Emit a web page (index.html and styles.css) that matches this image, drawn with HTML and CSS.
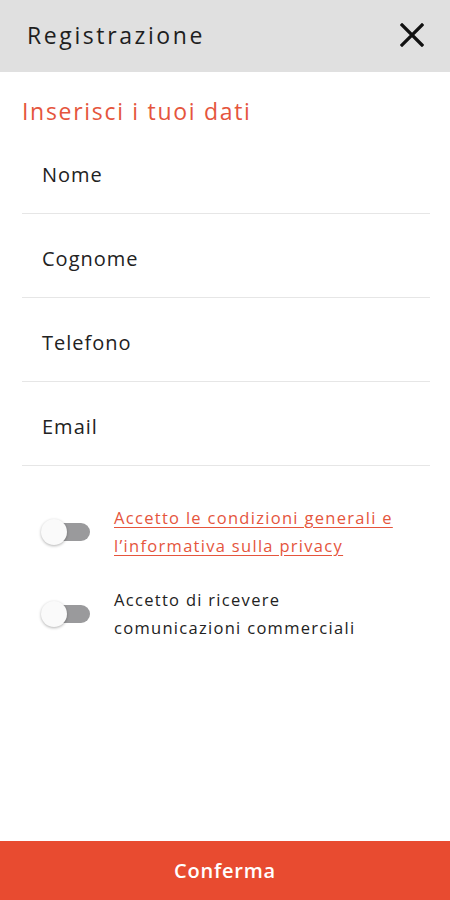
FILE: index.html
```html
<!DOCTYPE html>
<html lang="it">
<head>
<meta charset="utf-8">
<title>Registrazione</title>
<link rel="stylesheet" href="styles.css">
</head>
<body>
<div class="screen">
  <header class="topbar">
    <span class="topbar-title">Registrazione</span>
    <svg class="close" width="24" height="24" viewBox="0 0 24 24" aria-hidden="true">
      <path d="M2 2 L22 22 M22 2 L2 22" stroke="#111" stroke-width="3.2" stroke-linecap="square" fill="none"/>
    </svg>
  </header>
  <main class="content">
    <h1 class="section-title">Inserisci i tuoi dati</h1>
    <div class="fields">
      <div class="field">Nome</div>
      <div class="field">Cognome</div>
      <div class="field">Telefono</div>
      <div class="field">Email</div>
    </div>
    <div class="consents">
      <div class="consent">
        <span class="switch"><span class="knob"></span></span>
        <a class="consent-text link">Accetto le condizioni generali e l’informativa sulla privacy</a>
      </div>
      <div class="consent">
        <span class="switch"><span class="knob"></span></span>
        <span class="consent-text">Accetto di ricevere comunicazioni commerciali</span>
      </div>
    </div>
  </main>
  <button class="confirm">Conferma</button>
</div>
</body>
</html>
```
FILE: styles.css
```css
* { box-sizing: border-box; }
html, body { margin: 0; padding: 0; }
body {
  font-family: "Open Sans", "Liberation Sans", sans-serif;
  color: #222;
  background: #fff;
}
.screen {
  width: 450px;
  height: 900px;
  display: flex;
  flex-direction: column;
}
.topbar {
  height: 72px;
  background: #e0e0e0;
  display: flex;
  align-items: center;
  justify-content: space-between;
  padding: 0 27px 2px 27px;
  flex-shrink: 0;
}
.topbar-title {
  font-size: 23px;
  color: #1e1e1e;
  letter-spacing: 2.6px;
}
.close { display: block; margin-right: -1px; margin-top: -1px; }
.content {
  flex: 1;
  padding: 0 20px 0 22px;
}
.section-title {
  margin: 0;
  padding-top: 24px;
  font-weight: 400;
  font-size: 23px;
  line-height: 30px;
  letter-spacing: 1.7px;
  color: #e5553d;
}
.fields { margin-top: 4px; }
.field {
  height: 84px;
  padding: 31px 0 0 20px;
  font-size: 20px;
  line-height: 28px;
  letter-spacing: 1px;
  color: #222;
  border-bottom: 1.5px solid #e6e6e6;
}
.consents {
  padding-top: 38px;
  display: flex;
  flex-direction: column;
  gap: 26px;
}
.consent {
  display: flex;
  align-items: center;
  padding-right: 28px;
}
.switch {
  position: relative;
  width: 46px;
  height: 18px;
  margin-left: 22px;
  margin-right: 24px;
  border-radius: 9px;
  background: #9a9a9c;
  flex-shrink: 0;
}
.knob {
  position: absolute;
  left: -3px;
  top: -4px;
  width: 26px;
  height: 26px;
  border-radius: 50%;
  background: #fafafa;
  box-shadow: 0 1px 3px rgba(0,0,0,0.3);
}
.consent-text {
  font-size: 16.5px;
  line-height: 28px;
  letter-spacing: 1.3px;
  color: #222;
}
.link {
  color: #e5553d;
  text-decoration: underline;
  text-underline-offset: 3px;
}
.confirm {
  height: 59px;
  border: 0;
  margin: 0;
  background: #e84b30;
  color: #fff;
  font-family: inherit;
  font-size: 20px;
  font-weight: 600;
  letter-spacing: 0.8px;
  flex-shrink: 0;
}
```
